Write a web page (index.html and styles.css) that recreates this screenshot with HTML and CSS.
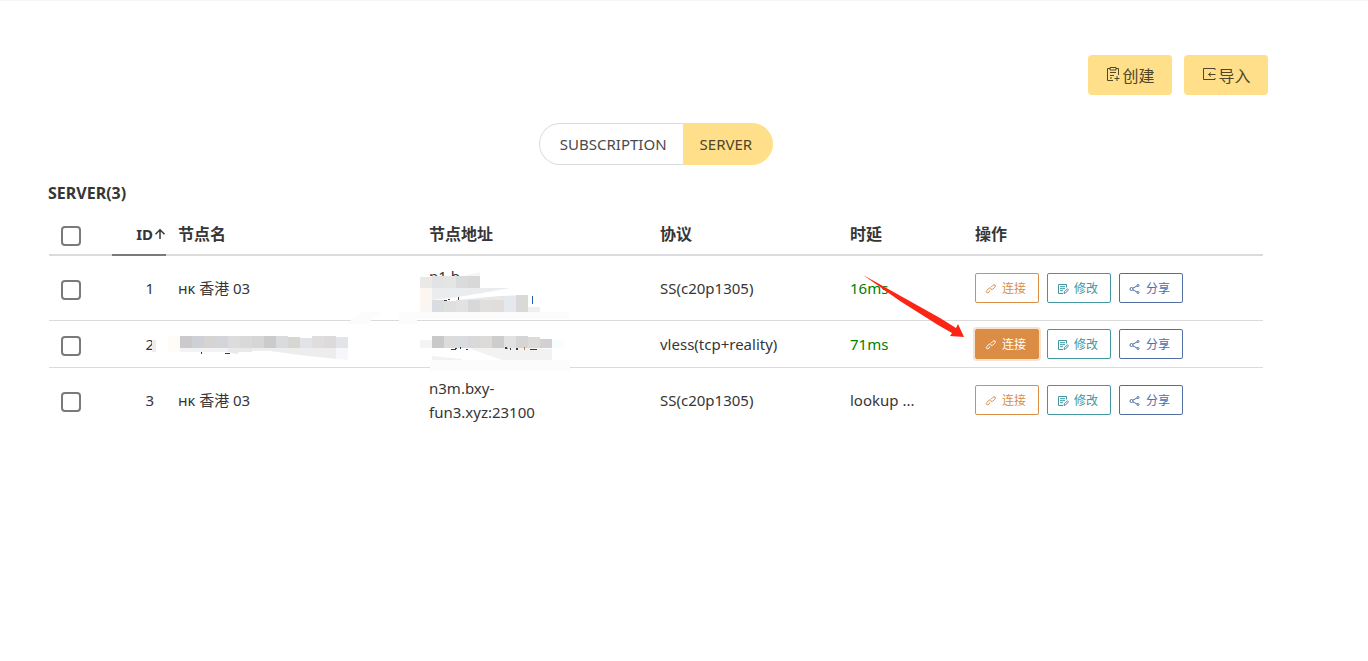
FILE: index.html
```html
<!DOCTYPE html>
<html lang="zh-CN">
<head>
<meta charset="utf-8">
<title>SERVER</title>
<link rel="stylesheet" href="styles.css">
</head>
<body>
<svg class="sprite" aria-hidden="true">
  <symbol id="i-create" viewBox="0 0 16 16"><path d="M5 2.500H2.500V14.500H8M11 2.500h2.500V9M5 1.500h6v2.500H5zM5 6.500h6M5 9.500h4M5 12h2M12 10v5M9.500 12.500h5"/></symbol>
  <symbol id="i-import" viewBox="0 0 16 16"><path d="M14 2.500H2.500V13.500H14M14 2.500V4M14 12V13.500M7.500 8.500h7M10 6.500L7.500 8.500l2.500 2"/></symbol>
  <symbol id="i-link" viewBox="0 0 12 12"><path d="M5 7.500L3.800 9.200Q2.800 10.400 1.700 9.500Q.8 8.500 2 7.300L4.200 5.200Q5.300 4.400 6.300 5.500M5.500 5.700Q6.400 7.200 7.600 6.300L9.800 4.200Q11 3 10.100 2.100Q9 1.200 7.900 2.300L6.200 4"/></symbol>
  <symbol id="i-edit" viewBox="0 0 12 12"><path d="M9.500 4.500V1.500H1.500V10.500H6M3 3.700h5M3 5.700h5M3 7.700h3M7 10.500l.4-1.700L10.500 5.700l1 1L8.500 10z"/></symbol>
  <symbol id="i-share" viewBox="0 0 12 12"><circle cx="2.500" cy="6" r="1.500"/><circle cx="9" cy="2.500" r="1"/><circle cx="9" cy="9.500" r="1"/><path d="M3.800 5.200L8 3M3.800 6.800L8 9"/></symbol>
</svg>

<main class="page">
  <div class="toolbar">
    <button class="btn" type="button"><svg class="icon"><use href="#i-create"/></svg>创建</button>
    <button class="btn" type="button"><svg class="icon"><use href="#i-import"/></svg>导入</button>
  </div>

  <nav class="tabs">
    <a class="tab" href="#subscription">SUBSCRIPTION</a>
    <a class="tab active" href="#server">SERVER</a>
  </nav>

  <h1 class="title">SERVER(3)</h1>

  <div class="table-wrap">
  <table class="table">
    <colgroup>
      <col class="c-check"><col class="c-id"><col class="c-name"><col class="c-addr"><col class="c-proto"><col class="c-delay"><col class="c-ops">
    </colgroup>
    <thead>
      <tr>
        <th><input class="check" type="checkbox" aria-label="全选"></th>
        <th class="id sorted"><span class="sort">ID<svg class="arrow-up" viewBox="0 0 12 12"><path d="M6 11V2M1.500 6.200L6 1.700l4.500 4.500"/></svg></span></th>
        <th>节点名</th><th>节点地址</th><th>协议</th><th>时延</th><th>操作</th>
      </tr>
    </thead>
    <tbody>
      <tr>
        <td><input class="check" type="checkbox" aria-label="1"></td>
        <td class="id">1</td>
        <td>ʜᴋ 香港 03</td>
        <td>n1.b</td>
        <td>SS(c20p1305)</td>
        <td class="ok">16ms</td>
        <td><div class="ops">
          <button class="op connect" type="button"><svg class="mini"><use href="#i-link"/></svg>连接</button>
          <button class="op edit" type="button"><svg class="mini"><use href="#i-edit"/></svg>修改</button>
          <button class="op share" type="button"><svg class="mini"><use href="#i-share"/></svg>分享</button>
        </div></td>
      </tr>
      <tr>
        <td><input class="check" type="checkbox" aria-label="2"></td>
        <td class="id">2</td>
        <td></td>
        <td></td>
        <td>vless(tcp+reality)</td>
        <td class="ok">71ms</td>
        <td><div class="ops">
          <button class="op connect focus" type="button"><svg class="mini"><use href="#i-link"/></svg>连接</button>
          <button class="op edit" type="button"><svg class="mini"><use href="#i-edit"/></svg>修改</button>
          <button class="op share" type="button"><svg class="mini"><use href="#i-share"/></svg>分享</button>
        </div></td>
      </tr>
      <tr>
        <td><input class="check" type="checkbox" aria-label="3"></td>
        <td class="id">3</td>
        <td>ʜᴋ 香港 03</td>
        <td>n3m.bxy-<br>fun3.xyz:23100</td>
        <td>SS(c20p1305)</td>
        <td>lookup ...</td>
        <td><div class="ops">
          <button class="op connect" type="button"><svg class="mini"><use href="#i-link"/></svg>连接</button>
          <button class="op edit" type="button"><svg class="mini"><use href="#i-edit"/></svg>修改</button>
          <button class="op share" type="button"><svg class="mini"><use href="#i-share"/></svg>分享</button>
        </div></td>
      </tr>
    </tbody>
  </table>
  </div>
</main>

<svg class="overlay" width="1368" height="661" aria-hidden="true">
  <!-- first address -->
  <path fill="#fff" d="M420 276h150v36H420z"/>
  <path fill="#f5f6f6" d="M462 276l18-4v5h-18z"/>
  <g shape-rendering="crispEdges">
    <path fill="#ebe8e8" d="M420 277h12v11h-12z"/><path fill="#e1e3e4" d="M432 276h12v12h-12z"/><path fill="#e4e6e6" d="M444 276h12v12h-12z"/><path fill="#dadbdc" d="M456 276h12v12h-12z"/><path fill="#d8d8d9" d="M468 276h12v12h-12z"/>
    <path fill="#fcf6f3" d="M420 288h12v24h-12z"/>
  </g>
  <path fill="#ebecee" d="M432 288h78l-28 5-24 4-26 3z"/>
  <path fill="#e7e7e7" d="M458 300l42-4 28-1v6h-70z"/>
  <g shape-rendering="crispEdges">
    <path fill="#d9dce0" d="M432 300h12v12h-12z"/><path fill="#e1dfde" d="M444 301h12v11h-12z"/><path fill="#e2e2e2" d="M456 300h12v12h-12z"/><path fill="#d8d8d8" d="M468 300h12v12h-12z"/><path fill="#e1dfde" d="M480 300h12v12h-12z"/><path fill="#dfdedd" d="M492 300h12v12h-12z"/><path fill="#e5e8ec" d="M504 296h12v16h-12z"/><path fill="#dad9d8" d="M516 295h12v17h-12z"/>
    <path fill="#f0f0f0" d="M528 307h12v5h-12z"/><path fill="#1f60a8" d="M532 296h1v8h-1z"/>
    <path fill="#3c3c3c" d="M444 300h3v1h-3zM448 299h2v1h-2zM458 297h1v3h-1z"/>
    <path fill="#fcfcfc" d="M417 312h152v7H417z"/>
  </g>
  <path fill="#fcfcfc" d="M362 312h20l-12 9v3H344l6-3zM401 312h16v12h-18v-8z"/>
  <!-- second name -->
  <g shape-rendering="crispEdges">
    <path fill="#ededed" d="M152 340h4v12h-4z"/><path fill="#fffcf7" d="M168 336h12v16h-12z"/>
    <path fill="#cbc9cc" d="M180 336h12v12h-12z"/><path fill="#cdd0d4" d="M192 336h12v12h-12z"/><path fill="#d6d4d2" d="M204 336h12v12h-12z"/><path fill="#d2d6db" d="M216 336h12v12h-12z"/><path fill="#dcdcdd" d="M228 336h12v12h-12z"/><path fill="#d9d9d9" d="M240 336h12v12h-12z"/><path fill="#d6d6d7" d="M252 336h12v12h-12z"/><path fill="#cacbcc" d="M264 336h12v12h-12z"/><path fill="#dadbdc" d="M276 336h12v12h-12z"/><path fill="#d6d6d3" d="M288 337h12v11h-12z"/><path fill="#e0e4e9" d="M300 338h12v10h-12z"/><path fill="#dfdedd" d="M312 336h12v12h-12z"/><path fill="#dddadb" d="M324 336h12v12h-12z"/><path fill="#e2e4e9" d="M336 337h12v11h-12z"/>
    <path fill="#3c3c3c" d="M201 351h1v3h-1zM225 353h5v1h-5z"/>
  </g>
  <path fill="#f3f3f3" d="M180 348h48v4h-48z"/>
  <path fill="#e9e9ea" d="M228 348h24v4h-13l-2 2-9-2z"/>
  <path fill="#ededed" d="M252 348h84v11l-36-4-30-4h-18z"/>
  <path fill="#f6f7fa" d="M336 348h12v12l-12-1z"/>
  <!-- second address -->
  <g shape-rendering="crispEdges">
    <path fill="#f5f4f3" d="M420 340h12v8h-12z"/><path fill="#c9c9c9" d="M432 336h12v12h-12z"/><path fill="#dddcdc" d="M444 336h12v12h-12z"/><path fill="#d9dde1" d="M456 336h12v12h-12z"/><path fill="#d9d9d9" d="M468 336h12v12h-12z"/><path fill="#dddbda" d="M480 336h12v12h-12z"/><path fill="#cdcdce" d="M492 336h12v12h-12z"/><path fill="#e2e2e2" d="M504 336h12v12h-12z"/><path fill="#d6d5d5" d="M516 336h12v12h-12z"/><path fill="#dddbda" d="M528 337h12v11h-12z"/><path fill="#d2d0d1" d="M540 339h12v9h-12z"/><path fill="#f7fcff" d="M552 340h12v8h-12z"/>
    <path fill="#fcfcfc" d="M430 360h140v11H430z"/>
  </g>
  <path fill="#f2f2f2" d="M432 356l30 3v1h-30zM468 348h60l24 1v11h-50z"/>
  <g shape-rendering="crispEdges">
    <path fill="#3c3c3c" d="M451 349h5v1h-5zM455 348h2v1h-2zM460 347h1v2h-1zM466 349h2v1h-2zM505 347h2v2h-2zM510 348h1v2h-1zM516 348h2v2h-2zM530 349h7v1h-7z"/><path fill="#cf7d36" d="M507 348h1v1h-1zM524 347h1v3h-1z"/>
  </g>
  <!-- pointer -->
  <path fill="#fc2414" d="M863 275L890 290L940 318L956 328L958 324L964 337L950 336L952 333L938 325L900 301L883 289z"/>
</svg>
</body>
</html>
```
FILE: styles.css
```css
* { box-sizing: border-box; }
body {
  margin: 0;
  border-top: 1px solid #f5f5f5;
  background: #fff;
  color: #363636;
  font: 15px/24px "Noto Sans", "Noto Sans CJK SC", sans-serif;
}
button, input { font: inherit; margin: 0; }
.sprite { position: absolute; width: 0; height: 0; }
svg { fill: none; stroke: currentColor; stroke-width: 1; }
.overlay { position: absolute; top: 0; left: 0; pointer-events: none; stroke: none; }

.page { padding: 54px 104px 40px 48px; }
.toolbar { display: flex; justify-content: flex-end; gap: 12px; margin-right: -4px; }
.btn {
  display: flex;
  align-items: center;
  justify-content: center;
  width: 84px;
  height: 40px;
  padding: 2px 0 0;
  border: 0;
  border-radius: 4px;
  background: #ffdf8a;
  color: #504629;
  font-size: 16px;
}
.icon { width: 16px; height: 16px; margin: 0 1px 4px 0; }

.tabs { display: flex; justify-content: center; margin-top: 28px; }
.tab {
  height: 42px;
  padding: 8px 16px 8px 20px;
  border: 1px solid #dbdbdb;
  border-right: 0;
  border-radius: 21px 0 0 21px;
  color: #4a4a4a;
  text-decoration: none;
}
.tab.active {
  padding: 8px 20px 8px 16px;
  border: 1px solid #ffdf8a;
  border-radius: 0 21px 21px 0;
  background: #ffdf8a;
  color: #504629;
}

.title { margin: 16px 0 9px; font-size: 16px; line-height: 24px; font-weight: 700; }

.table-wrap { padding: 0 1px; }
.table { width: 100%; border-collapse: separate; border-spacing: 0; table-layout: fixed; }
.c-check { width: 63px; }
.c-id { width: 54px; }
.c-name { width: 251px; }
.c-addr { width: 231px; }
.c-proto { width: 190px; }
.c-delay { width: 125px; }
th, td { padding: 8px 12px; text-align: left; vertical-align: middle; border-bottom: 1px solid #dbdbdb; }
th { border-bottom: 2px solid #dbdbdb; font-weight: 700; white-space: nowrap; }
th:not(.id) { font-size: 16px; }
tbody tr:first-child td { height: 65px; }
tbody tr:first-child td:nth-child(4) { padding-bottom: 32px; }
tbody tr:last-child td { border-bottom: 0; }
.id { text-align: right; }
.sorted { padding-right: 0; border-bottom-color: #7a7a7a; }
.sort { display: inline-flex; align-items: center; gap: 1px; }
.arrow-up { width: 12px; height: 12px; stroke-width: 1.5; }
.check {
  appearance: none;
  display: block;
  width: 20px;
  height: 20px;
  margin-top: 4px;
  border: 2px solid #7a7a7a;
  border-radius: 4px;
  background: #fff;
}
.ok { color: #008000; }

.ops { display: flex; gap: 8px; }
.op {
  display: flex;
  align-items: center;
  justify-content: center;
  gap: 5px;
  width: 64px;
  height: 30px;
  padding: 1px 3px 0 0;
  border: 1px solid;
  border-radius: 2px;
  background: #fff;
  font-size: 12px;
}
.mini { width: 12px; height: 12px; }
.connect { color: #d98e46; }
.edit { color: #4296a0; }
.share { color: #506da4; }
.connect.focus { border-color: #db8d45; background: #db8d45; color: #fff; box-shadow: 0 0 0 2px #db8d4540; }
```
